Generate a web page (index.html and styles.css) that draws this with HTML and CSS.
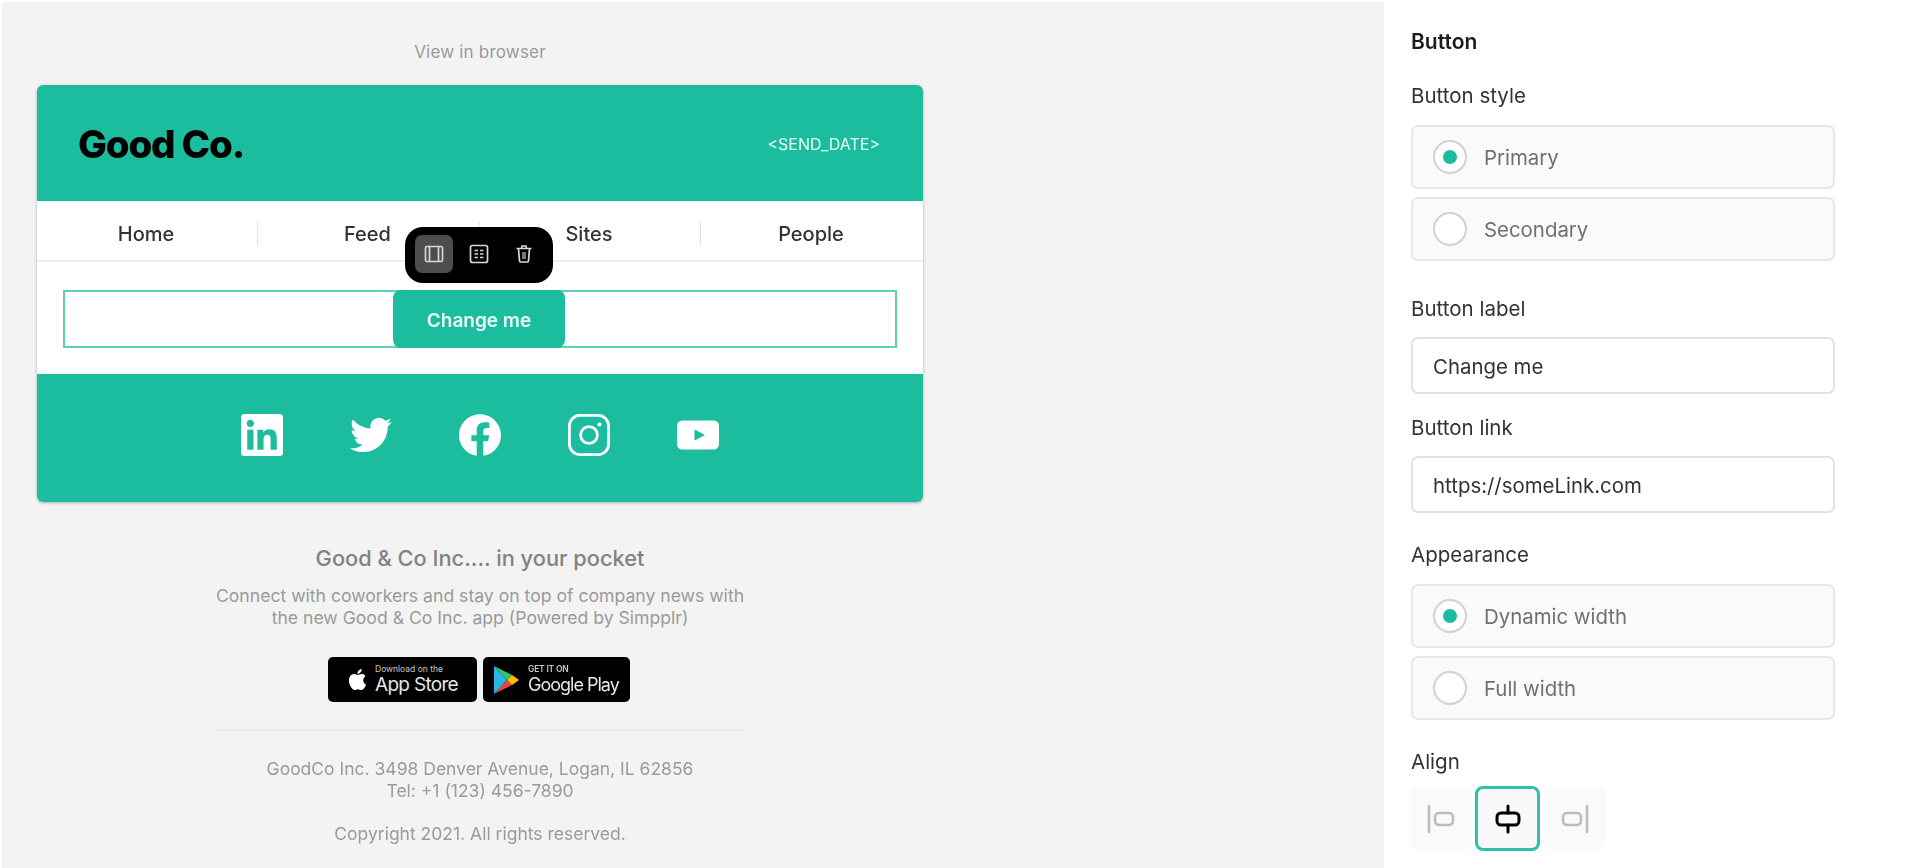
FILE: index.html
```html
<!DOCTYPE html>
<html lang="en">
<head>
<meta charset="utf-8">
<title>Email editor</title>
<link rel="stylesheet" href="styles.css">
</head>
<body>
<div class="app">
  <main class="canvas">
    <div class="column">
      <p class="view-link">View in browser</p>
      <section class="card">
        <header class="card-head">
          <span class="logo">Good Co.</span>
          <span class="date">&lt;SEND_DATE&gt;</span>
        </header>
        <nav class="nav">
          <span class="nav-item">Home</span>
          <span class="nav-item">Feed</span>
          <span class="nav-item">Sites</span>
          <span class="nav-item">People</span>
        </nav>
        <div class="block">
          <div class="selected"><span class="cta">Change me</span></div>
          <div class="toolbar">
            <span class="tool tool-on">
              <svg viewBox="0 0 20 20" class="tool-icon"><rect x="1.5" y="2.5" width="17" height="15" rx="1.5"/><path d="M5.5 2.5v15M14.500 2.500v15"/></svg>
            </span>
            <span class="tool">
              <svg viewBox="0 0 20 20" class="tool-icon"><rect x="1.5" y="1.5" width="17" height="17" rx="2"/><path d="M5.500 6.500h3.500M5.500 10h3.500M5.500 13.500h3.500M11 6.500h3.500M11 10h3.500M11 13.500h3.500"/></svg>
            </span>
            <span class="tool">
              <svg viewBox="0 0 20 20" class="tool-icon"><path d="M2.5 4.5h15M7.5 4.5 8 2h4l.5 2.5M4.5 4.500l1 12.500a1.500 1.500 0 0 0 1.500 1h6a1.500 1.500 0 0 0 1.500-1l1-12.500"/><rect x="8" y="8" width="4" height="7" class="tool-fill"/></svg>
            </span>
          </div>
        </div>
        <footer class="social">
          <svg class="soc" viewBox="0 0 24 24"><path d="M20.447 20.452h-3.554v-5.569c0-1.328-.027-3.037-1.852-3.037-1.853 0-2.136 1.445-2.136 2.939v5.667H9.351V9h3.414v1.561h.046c.477-.9 1.637-1.85 3.37-1.85 3.601 0 4.267 2.37 4.267 5.455v6.286zM5.337 7.433c-1.144 0-2.063-.926-2.063-2.065 0-1.138.92-2.063 2.063-2.063 1.14 0 2.064.925 2.064 2.063 0 1.139-.925 2.065-2.064 2.065zm1.782 13.019H3.555V9h3.564v11.452zM22.225 0H1.771C.792 0 0 .774 0 1.729v20.542C0 23.227.792 24 1.771 24h20.451C23.2 24 24 23.227 24 22.271V1.729C24 .774 23.2 0 22.222 0h.003z"/></svg>
          <svg class="soc" viewBox="0 0 24 24"><path d="M23.953 4.57a10 10 0 01-2.825.775 4.958 4.958 0 002.163-2.723c-.951.555-2.005.959-3.127 1.184a4.92 4.92 0 00-8.384 4.482C7.69 8.095 4.067 6.13 1.64 3.162a4.822 4.822 0 00-.666 2.475c0 1.71.87 3.213 2.188 4.096a4.904 4.904 0 01-2.228-.616v.06a4.923 4.923 0 003.946 4.827 4.996 4.996 0 01-2.212.085 4.936 4.936 0 004.604 3.417 9.867 9.867 0 01-6.102 2.105c-.39 0-.779-.023-1.17-.067a13.995 13.995 0 007.557 2.209c9.053 0 13.998-7.496 13.998-13.985 0-.21 0-.42-.015-.63A9.935 9.935 0 0024 4.59z"/></svg>
          <svg class="soc" viewBox="0 0 24 24"><path d="M24 12.073c0-6.627-5.373-12-12-12s-12 5.373-12 12c0 5.99 4.388 10.954 10.125 11.854v-8.385H7.078v-3.47h3.047V9.43c0-3.007 1.792-4.669 4.533-4.669 1.312 0 2.686.235 2.686.235v2.953H15.83c-1.491 0-1.956.925-1.956 1.874v2.25h3.328l-.532 3.47h-2.796v8.385C19.612 23.027 24 18.062 24 12.073z"/></svg>
          <svg class="soc soc-line" viewBox="0 0 24 24"><rect x=".8" y=".8" width="22.400" height="22.400" rx="6"/><circle cx="12" cy="12" r="4.800"/><circle cx="18" cy="6" r="1.200" class="soc-dot"/></svg>
          <svg class="soc" viewBox="0 0 24 24"><path fill-rule="evenodd" d="M3 3.700h18a3 3 0 0 1 3 3v10.600a3 3 0 0 1-3 3H3a3 3 0 0 1-3-3V6.700a3 3 0 0 1 3-3zM10 8.800v6.400l6-3.200z"/></svg>
        </footer>
      </section>
      <h2 class="pocket">Good &amp; Co Inc.... in your pocket</h2>
      <p class="pitch">Connect with coworkers and stay on top of company news with<br>the new Good &amp; Co Inc. app (Powered by Simpplr)</p>
      <div class="badges">
        <div class="badge badge-apple">
          <svg class="apple" viewBox="0 0 24 24"><path d="M12.152 6.896c-.948 0-2.415-1.078-3.96-1.04-2.04.027-3.91 1.183-4.961 3.014-2.117 3.675-.546 9.103 1.519 12.09 1.013 1.454 2.208 3.09 3.792 3.039 1.52-.065 2.09-.987 3.935-.987 1.831 0 2.35.987 3.96.948 1.637-.026 2.676-1.48 3.676-2.948 1.156-1.688 1.636-3.325 1.662-3.415-.039-.013-3.182-1.221-3.22-4.857-.026-3.04 2.48-4.494 2.597-4.559-1.429-2.09-3.623-2.324-4.39-2.376-2-.156-3.675 1.09-4.61 1.09zM15.53 3.83c.843-1.012 1.4-2.427 1.245-3.83-1.207.052-2.662.805-3.532 1.818-.78.896-1.454 2.338-1.273 3.714 1.338.104 2.715-.688 3.559-1.701"/></svg>
          <div class="badge-text"><span class="badge-small">Download on the</span><span class="badge-big">App Store</span></div>
        </div>
        <div class="badge badge-play">
          <svg class="play" viewBox="0 0 26 30"><polygon points="1,1 1,29 14,15" fill="#25b7e6"/><polygon points="1,1 14,15 19,10" fill="#35c46e"/><polygon points="1,29 14,15 19,20" fill="#ea4435"/><polygon points="19,10 14,15 19,20 26,15" fill="#fbbc04"/></svg>
          <div class="badge-text"><span class="badge-small badge-caps">GET IT ON</span><span class="badge-big badge-google">Google Play</span></div>
        </div>
      </div>
      <hr class="rule">
      <p class="address">GoodCo Inc. 3498 Denver Avenue, Logan, IL 62856<br>Tel: +1 (123) 456-7890</p>
      <p class="copyright">Copyright 2021. All rights reserved.</p>
    </div>
  </main>
  <aside class="panel">
    <h1 class="panel-title">Button</h1>
    <section class="field field-style">
      <div class="label">Button style</div>
      <div class="radio-group">
        <div class="radio-card"><span class="radio radio-on"></span>Primary</div>
        <div class="radio-card"><span class="radio"></span>Secondary</div>
      </div>
    </section>
    <section class="field field-label">
      <div class="label">Button label</div>
      <div class="input">Change me</div>
    </section>
    <section class="field field-link">
      <div class="label">Button link</div>
      <div class="input">https://someLink.com</div>
    </section>
    <section class="field field-appearance">
      <div class="label">Appearance</div>
      <div class="radio-group">
        <div class="radio-card"><span class="radio radio-on"></span>Dynamic width</div>
        <div class="radio-card"><span class="radio"></span>Full width</div>
      </div>
    </section>
    <section class="field field-align">
      <div class="label">Align</div>
      <div class="align-row">
        <span class="align-btn"><svg class="align-icon" viewBox="0 0 30 30"><path d="M3 2v26"/><rect x="9" y="9" width="18" height="12" rx="4"/></svg></span>
        <span class="align-btn align-on"><svg class="align-icon" viewBox="0 0 30 30"><path d="M15 2v7M15 21v7"/><rect x="4" y="9" width="22" height="12" rx="4"/></svg></span>
        <span class="align-btn"><svg class="align-icon" viewBox="0 0 30 30"><path d="M27 2v26"/><rect x="3" y="9" width="18" height="12" rx="4"/></svg></span>
      </div>
    </section>
  </aside>
</div>
</body>
</html>
```

FILE: styles.css
```css
* { box-sizing: border-box; }
html, body { margin: 0; height: 100%; overflow: hidden; background: #fff; }
body { font-family: Inter, "Liberation Sans", sans-serif; color: #333; }
p, h1, h2 { margin: 0; font-weight: inherit; font-size: inherit; }

.app { display: flex; height: 868px; filter: blur(0.6px); }

.canvas { width: 1382px; margin: 2px 0 0 2px; background: #f3f3f3; padding: 38px 0 0 35px; }
.column { width: 886px; display: flex; flex-direction: column; align-items: center; }

.view-link { height: 24px; line-height: 24px; font-size: 17px; color: #9a9a9a; letter-spacing: .2px; }

.card { position: relative; width: 886px; margin-top: 21px; border-radius: 6px; background: #fff; box-shadow: 0 1px 3px rgba(0,0,0,.3); }
.card-head { height: 116px; background: #1cbd9e; border-radius: 6px 6px 0 0; display: flex; align-items: center; justify-content: space-between; padding: 2px 43px 0 41px; }
.logo { font-size: 38.500px; font-weight: 800; letter-spacing: -1.2px; color: #000; }
.date { font-size: 16px; color: #e9fbf6; }

.nav { height: 61px; padding-top: 7px; display: grid; grid-template-columns: 220px 222px 221px 1fr; align-items: center; border-bottom: 2px solid #eee; }
.nav-item { height: 24px; line-height: 24px; padding-right: 2px; text-align: center; font-size: 20px; font-weight: 500; color: #333; border-left: 1px solid #e6e6e6; }
.nav-item:first-child { border-left: 0; }

.block { padding: 28px 26px 26px; }
.selected { height: 58px; border: 2px solid #5dd0b9; display: flex; justify-content: center; padding-right: 2px; }
.cta { width: 172px; margin: -2px 0; padding-top: 2px; background: #1cbd9e; border-radius: 8px; color: #eafaf6; font-size: 19px; font-weight: 600; display: flex; align-items: center; justify-content: center; }

.toolbar { position: absolute; left: 368px; top: 142px; width: 148px; height: 56px; padding: 0 0 2px 10px; border-radius: 18px; background: #000; display: flex; align-items: center; }
.tool { width: 38px; height: 38px; border-radius: 7px; display: flex; align-items: center; justify-content: center; margin-right: 7px; }
.tool-on { background: #4d4d4d; }
.tool-icon { width: 20px; height: 20px; fill: none; stroke: #d8d8d8; stroke-width: 1.7; }
.tool-fill { fill: #777; stroke: none; }

.social { height: 128px; padding-bottom: 7px; background: #1cbd9e; border-radius: 0 0 6px 6px; display: flex; align-items: center; justify-content: center; gap: 67px; }
.soc { width: 42px; height: 42px; fill: #fff; }
.soc-line { fill: none; stroke: #fff; stroke-width: 1.600; }
.soc-dot { fill: #fff; stroke: none; }

.pocket { margin-top: 42px; height: 28px; line-height: 28px; font-size: 21.800px; font-weight: 500; color: #828282; }
.pitch { margin-top: 13px; line-height: 22px; font-size: 17.600px; color: #9a9a9a; text-align: center; }

.badges { margin: 28px 2px 0 0; display: flex; gap: 6px; }
.badge { height: 45px; background: #000; border-radius: 5px; display: flex; align-items: center; color: #e6e6e6; }
.badge-apple { width: 149px; padding-left: 19px; gap: 7px; }
.badge-play { width: 147px; padding-left: 10px; gap: 9px; }
.apple { width: 21px; height: 25px; fill: #fff; }
.play { width: 26px; height: 30px; }
.badge-text { display: flex; flex-direction: column; }
.badge-small { font-size: 8.500px; line-height: 10px; color: #c9c9c9; white-space: nowrap; }
.badge-caps { font-weight: 600; letter-spacing: -.2px; }
.badge-big { font-size: 19px; line-height: 21px; letter-spacing: -.7px; white-space: nowrap; }
.badge-google { font-size: 18px; letter-spacing: -1px; }

.rule { width: 532px; margin: 28px 0 0; border: 0; border-top: 1px solid #e6e6e6; }
.address { margin-top: 27px; line-height: 22px; font-size: 17.500px; color: #9a9a9a; text-align: center; }
.copyright { margin-top: 21px; line-height: 22px; font-size: 17.500px; color: #9a9a9a; }

.panel { flex: 1; padding: 30px 0 0 27px; }
.panel-title { height: 24px; line-height: 24px; font-size: 21px; font-weight: 600; color: #1c1c1c; }
.field { width: 424px; }
.field-style { margin-top: 30px; }
.field-label { margin-top: 36px; }
.field-link { margin-top: 22px; }
.field-appearance { margin-top: 30px; }
.field-align { margin-top: 30px; }
.label { height: 24px; line-height: 24px; font-size: 20.500px; color: #333; margin-bottom: 16px; }

.radio-group { padding-top: 1px; display: flex; flex-direction: column; gap: 8px; }
.radio-card { height: 64px; border: 2px solid #e7e7e7; border-radius: 7px; background: #fafafa; display: flex; align-items: center; padding-left: 20px; gap: 17px; font-size: 20.400px; color: #707070; }
.radio { width: 34px; height: 34px; border: 2px solid #c9d6d2; border-radius: 50%; background: #fff; display: flex; align-items: center; justify-content: center; }
.radio-on::after { content: ""; width: 14px; height: 14px; border-radius: 50%; background: #1cbd9e; }

.input { height: 57px; border: 2px solid #e2e2e2; border-radius: 7px; background: #fff; display: flex; align-items: center; padding: 2px 0 0 20px; font-size: 20.400px; color: #333; }

.align-row { display: flex; align-items: center; gap: 3px; margin: -4px 0 0 -2px; }
.align-btn { width: 63px; height: 63px; border-radius: 8px; background: #fafafa; display: flex; align-items: center; justify-content: center; }
.align-on { width: 65px; height: 65px; border: 3px solid #2cc2a5; background: #f9f9f9; }
.align-icon { width: 30px; height: 30px; fill: none; stroke: #bdbdbd; stroke-width: 2.6; stroke-linecap: round; }
.align-on .align-icon { stroke: #000; stroke-width: 3; }
```
